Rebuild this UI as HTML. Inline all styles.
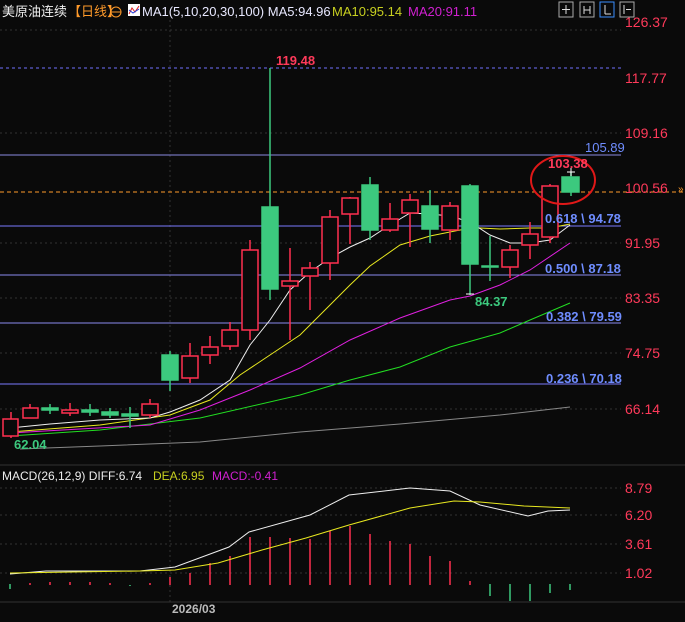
<!DOCTYPE html><html><head><meta charset="utf-8"><style>
body{margin:0;background:#0a0a0a;width:685px;height:622px;overflow:hidden;font-family:"Liberation Sans","Noto Sans CJK SC",sans-serif}
svg{display:block}
</style></head><body>
<svg width="685" height="622" xmlns="http://www.w3.org/2000/svg" font-family="Liberation Sans, Noto Sans CJK SC, sans-serif">
<rect width="685" height="622" fill="#0a0a0a"/>
<g stroke="#333" stroke-dasharray="2,3" stroke-width="1">
<line x1="0" y1="30" x2="621" y2="30"/>
<line x1="0" y1="133" x2="621" y2="133"/><line x1="0" y1="243" x2="621" y2="243"/>
<line x1="0" y1="298" x2="621" y2="298"/><line x1="0" y1="353" x2="621" y2="353"/><line x1="0" y1="409" x2="621" y2="409"/>
<line x1="0" y1="488" x2="621" y2="488"/><line x1="0" y1="515" x2="621" y2="515"/><line x1="0" y1="544" x2="621" y2="544"/><line x1="0" y1="573" x2="621" y2="573"/>
<line x1="170" y1="20" x2="170" y2="602"/>
</g>
<line x1="0" y1="465" x2="685" y2="465" stroke="#333"/>
<line x1="0" y1="602" x2="685" y2="602" stroke="#333"/>
<line x1="0" y1="68" x2="621" y2="68" stroke="#7070ff" stroke-dasharray="3,3"/>
<line x1="0" y1="155" x2="621" y2="155" stroke="#8a8ae0"/>
<line x1="0" y1="192" x2="685" y2="192" stroke="#ff9a2a" stroke-dasharray="4,3"/>
<line x1="0" y1="226" x2="621" y2="226" stroke="#7a7aff"/>
<line x1="0" y1="275" x2="621" y2="275" stroke="#8a8aee"/>
<line x1="0" y1="323" x2="621" y2="323" stroke="#8a8aee"/>
<line x1="0" y1="384" x2="621" y2="384" stroke="#7a7aff"/>
<g fill="none" stroke-width="1">
<polyline stroke="#888" points="20,449 100,446 200,442 300,432 400,424 500,415 570,407"/>
<polyline stroke="#22dd22" points="10,436 100,430 200,418 300,395 350,380 400,367 450,347 500,333 530,320 570,303"/>
<polyline stroke="#e020e0" points="10,433 150,425 200,410 250,390 300,368 350,340 400,318 450,300 470,296 500,285 530,270 570,243"/>
<polyline stroke="#e8e820" points="10,432 100,425 170,415 210,400 240,375 270,355 300,335 330,305 350,285 370,266 400,245 430,236 460,230 480,228 500,229 530,228 550,228 570,224"/>
<polyline stroke="#eee" points="10,428 50,424 100,420 150,418 170,412 200,400 230,380 250,345 270,320 290,290 310,272 330,258 350,247 370,238 390,225 410,213 430,214 450,216 470,222 490,235 510,243 530,243 550,240 570,225"/>
</g>
<g stroke-width="1.5">
<g stroke="#ff3050" fill="#0a0a0a">
<line x1="11" y1="412" x2="11" y2="438"/><rect x="3" y="419" width="15" height="17"/>
<line x1="30" y1="404" x2="30" y2="418"/><rect x="23" y="408" width="15" height="10"/>
<line x1="70" y1="403" x2="70" y2="416"/><rect x="62" y="410" width="16" height="3"/>
<line x1="150" y1="399" x2="150" y2="418"/><rect x="142" y="404" width="16" height="11"/>
<line x1="190" y1="343" x2="190" y2="383"/><rect x="182" y="356" width="16" height="22"/>
<line x1="210" y1="336" x2="210" y2="364"/><rect x="202" y="347" width="16" height="8"/>
<line x1="230" y1="322" x2="230" y2="350"/><rect x="222" y="330" width="16" height="16"/>
<line x1="250" y1="240" x2="250" y2="340"/><rect x="242" y="250" width="16" height="80"/>
<line x1="290" y1="248" x2="290" y2="340"/><rect x="282" y="281" width="16" height="5"/>
<line x1="310" y1="262" x2="310" y2="310"/><rect x="302" y="268" width="16" height="8"/>
<line x1="330" y1="210" x2="330" y2="280"/><rect x="322" y="217" width="16" height="46"/>
<line x1="350" y1="197" x2="350" y2="244"/><rect x="342" y="198" width="16" height="16"/>
<line x1="390" y1="203" x2="390" y2="232"/><rect x="382" y="219" width="16" height="11"/>
<line x1="410" y1="194" x2="410" y2="247"/><rect x="402" y="200" width="16" height="13"/>
<line x1="450" y1="202" x2="450" y2="240"/><rect x="442" y="206" width="16" height="24"/>
<line x1="510" y1="245" x2="510" y2="278"/><rect x="502" y="250" width="16" height="17"/>
<line x1="530" y1="222" x2="530" y2="259"/><rect x="522" y="234" width="16" height="11"/>
<line x1="550" y1="184" x2="550" y2="243"/><rect x="542" y="186" width="16" height="51"/>
</g>
<g stroke="#3cc97e" fill="#3cc97e">
<line x1="50" y1="404" x2="50" y2="414"/><rect x="42" y="408" width="16" height="2"/>
<line x1="90" y1="404" x2="90" y2="416"/><rect x="82" y="410" width="16" height="2"/>
<line x1="110" y1="408" x2="110" y2="418"/><rect x="102" y="412" width="16" height="3"/>
<line x1="130" y1="407" x2="130" y2="428"/><rect x="122" y="414" width="16" height="2"/>
<line x1="170" y1="351" x2="170" y2="391"/><rect x="162" y="355" width="16" height="25"/>
<line x1="270" y1="68" x2="270" y2="300"/><rect x="262" y="207" width="16" height="82"/>
<line x1="370" y1="177" x2="370" y2="240"/><rect x="362" y="185" width="16" height="45"/>
<line x1="430" y1="190" x2="430" y2="243"/><rect x="422" y="206" width="16" height="23"/>
<line x1="470" y1="184" x2="470" y2="295"/><rect x="462" y="186" width="16" height="78"/>
<line x1="490" y1="236" x2="490" y2="281"/><rect x="482" y="266" width="16" height="1"/>
<line x1="571" y1="172" x2="571" y2="196"/><rect x="562" y="177" width="17" height="15"/>
</g>
<g stroke="#fff" stroke-width="1"><line x1="567" y1="172" x2="575" y2="172"/><line x1="571" y1="168" x2="571" y2="176"/>
<line x1="466" y1="294" x2="474" y2="294"/></g>
</g>
<ellipse cx="563" cy="180" rx="32" ry="24" fill="none" stroke="#e01818" stroke-width="2"/>
<g font-size="13" font-weight="bold">
<text x="276" y="65" fill="#ff3a5a">119.48</text>
<text x="585" y="152" fill="#6f8dff" font-weight="normal">105.89</text>
<text x="548" y="168" fill="#ff3a5a">103.38</text>
<text x="545" y="223" fill="#6f8dff">0.618 \ 94.78</text>
<text x="545" y="273" fill="#6f8dff">0.500 \ 87.18</text>
<text x="546" y="321" fill="#6f8dff">0.382 \ 79.59</text>
<text x="546" y="383" fill="#6f8dff">0.236 \ 70.18</text>
<text x="475" y="306" fill="#3cc97e">84.37</text>
<text x="14" y="449" fill="#3cc97e">62.04</text>
</g>
<g font-size="14" fill="#ff3a5a">
<text x="625" y="27">126.37</text><text x="625" y="83">117.77</text><text x="625" y="138">109.16</text>
<text x="625" y="193">100.56</text><text x="625" y="248">91.95</text><text x="625" y="303">83.35</text>
<text x="625" y="358">74.75</text><text x="625" y="414">66.14</text>
<text x="625" y="493">8.79</text><text x="625" y="520">6.20</text><text x="625" y="549">3.61</text><text x="625" y="578">1.02</text>
</g>
<text x="678" y="192" fill="#ff9a2a" font-size="10">»</text>
<text x="2" y="16" font-size="13" fill="#eee">美原油连续</text>
<text x="68" y="16" font-size="13" fill="#ff9a2a">【日线】</text>
<circle cx="116" cy="12" r="5" fill="none" stroke="#ff9a2a"/><line x1="111" y1="12" x2="121" y2="12" stroke="#ff9a2a"/>
<rect x="128" y="4" width="12" height="12" fill="#fff"/><polyline points="129,14 132,8 135,12 139,6" fill="none" stroke="#e02020"/><polyline points="129,10 133,13 139,9" fill="none" stroke="#2040e0"/>
<text x="142" y="16" font-size="13" fill="#e8e8ff">MA1(5,10,20,30,100) MA5:94.96</text>
<text x="332" y="16" font-size="13" fill="#c8d020">MA10:95.14</text>
<text x="408" y="16" font-size="13" fill="#d020d0">MA20:91.11</text>
<g fill="none" stroke="#aaa"><rect x="559" y="2" width="14" height="15"/><rect x="580" y="2" width="14" height="15"/><rect x="600" y="2" width="14" height="15" stroke="#3a8eff"/><rect x="620" y="2" width="14" height="15"/></g>
<g stroke="#ddd"><line x1="566" y1="5" x2="566" y2="14"/><line x1="562" y1="9.5" x2="570" y2="9.5"/><line x1="584" y1="6" x2="584" y2="14"/><line x1="590" y1="6" x2="590" y2="14"/><line x1="584" y1="10" x2="590" y2="10"/><line x1="605" y1="5" x2="605" y2="14"/><line x1="605" y1="14" x2="611" y2="14"/><line x1="624" y1="5" x2="624" y2="14"/><line x1="626" y1="9.5" x2="631" y2="9.5"/></g>
<text x="2" y="480" font-size="12" fill="#eee">MACD(26,12,9) DIFF:6.74</text>
<text x="153" y="480" font-size="12" fill="#c8d020">DEA:6.95</text>
<text x="212" y="480" font-size="12" fill="#d020d0">MACD:-0.41</text>
<g stroke="#ff3050" stroke-width="1.5">
<line x1="30" y1="585" x2="30" y2="583"/><line x1="50" y1="585" x2="50" y2="582"/><line x1="70" y1="585" x2="70" y2="582"/><line x1="90" y1="585" x2="90" y2="582"/><line x1="110" y1="585" x2="110" y2="583"/><line x1="150" y1="585" x2="150" y2="583"/>
<line x1="170" y1="585" x2="170" y2="577"/><line x1="190" y1="585" x2="190" y2="573"/><line x1="210" y1="585" x2="210" y2="563"/><line x1="230" y1="585" x2="230" y2="556"/><line x1="250" y1="585" x2="250" y2="537"/><line x1="270" y1="585" x2="270" y2="537"/><line x1="290" y1="585" x2="290" y2="538"/><line x1="310" y1="585" x2="310" y2="539"/><line x1="330" y1="585" x2="330" y2="531"/><line x1="350" y1="585" x2="350" y2="526"/><line x1="370" y1="585" x2="370" y2="534"/><line x1="390" y1="585" x2="390" y2="541"/><line x1="410" y1="585" x2="410" y2="544"/><line x1="430" y1="585" x2="430" y2="556"/><line x1="450" y1="585" x2="450" y2="561"/><line x1="470" y1="585" x2="470" y2="581"/>
</g>
<g stroke="#3cc97e" stroke-width="1.5">
<line x1="10" y1="584" x2="10" y2="589"/><line x1="130" y1="585" x2="130" y2="586"/><line x1="490" y1="584" x2="490" y2="596"/><line x1="510" y1="584" x2="510" y2="601"/><line x1="530" y1="584" x2="530" y2="601"/><line x1="550" y1="584" x2="550" y2="593"/><line x1="570" y1="584" x2="570" y2="590"/>
</g>
<polyline fill="none" stroke="#eee" points="10,574 46,571 120,571 140,571 175,567 229,547 249,532 310,515 349,495 410,488 450,491 480,505 528,516 548,511 570,510"/>
<polyline fill="none" stroke="#e8e820" points="10,573 140,571 175,570 218,563 262,550 306,538 349,525 410,508 454,501 480,502 524,506 570,508"/>
<text x="172" y="613" font-size="12" font-weight="bold" fill="#bbb">2026/03</text>
</svg>
</body></html>
